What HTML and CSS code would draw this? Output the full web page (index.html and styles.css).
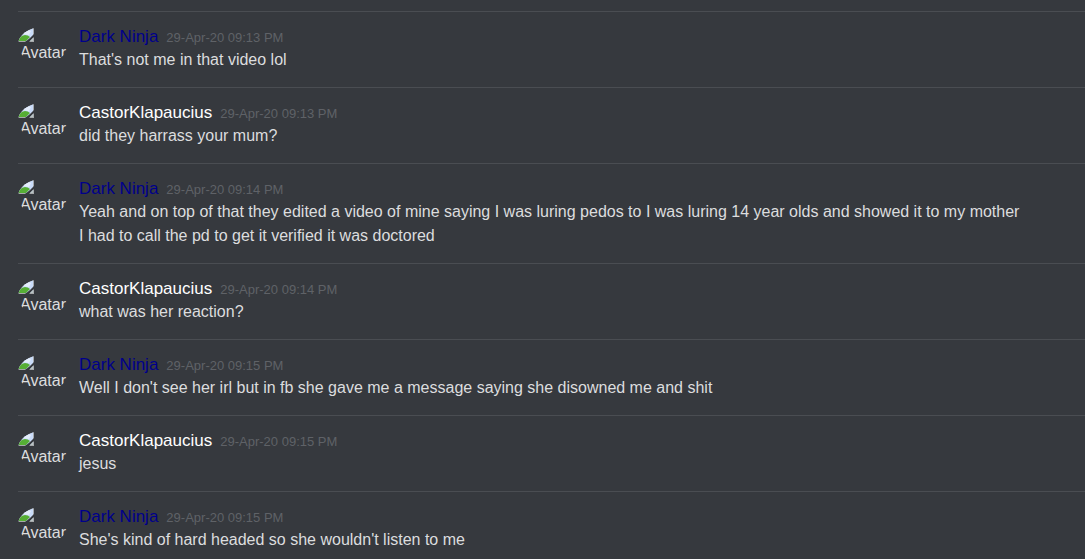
FILE: index.html
```html
<!DOCTYPE html>
<html lang="en">
<head>
<meta charset="utf-8">
<title>Chat log</title>
<link rel="stylesheet" href="styles.css">
</head>
<body>
<svg width="0" height="0" class="defs" aria-hidden="true">
  <symbol id="broken" viewBox="0 0 16 16">
    <path d="M0 0h16v15H0z" fill="#a5a8ab"/>
    <path d="M0 1h15v13H0z" fill="#c9dbf8"/>
    <path d="M4 7q1-2 3-2 2-3 6-1l-2 4z" fill="#e4edfc"/>
    <path d="M0 14q1-5 7-6 3 0 5 2l-4 4z" fill="#56ae35"/>
    <path d="M16 7v3L11 15H7l5-4z" fill="#36393e"/>
    <path d="M15 11v3h-3z" fill="#b9c4c4"/>
  </symbol>
</svg>
<main class="log">
  <article class="group">
    <div class="avatar"><svg class="icon" aria-hidden="true"><use href="#broken"/></svg><span>Avatar</span></div>
    <div class="messages">
      <header><span class="name navy">Dark Ninja</span><time class="time">29-Apr-20 09:13 PM</time></header>
      <p>That's not me in that video lol</p>
    </div>
  </article>
  <article class="group">
    <div class="avatar"><svg class="icon" aria-hidden="true"><use href="#broken"/></svg><span>Avatar</span></div>
    <div class="messages">
      <header><span class="name">CastorKlapaucius</span><time class="time">29-Apr-20 09:13 PM</time></header>
      <p>did they harrass your mum?</p>
    </div>
  </article>
  <article class="group">
    <div class="avatar"><svg class="icon" aria-hidden="true"><use href="#broken"/></svg><span>Avatar</span></div>
    <div class="messages">
      <header><span class="name navy">Dark Ninja</span><time class="time">29-Apr-20 09:14 PM</time></header>
      <p>Yeah and on top of that they edited a video of mine saying I was luring pedos to I was luring 14 year olds and showed it to my mother</p>
      <p>I had to call the pd to get it verified it was doctored</p>
    </div>
  </article>
  <article class="group">
    <div class="avatar"><svg class="icon" aria-hidden="true"><use href="#broken"/></svg><span>Avatar</span></div>
    <div class="messages">
      <header><span class="name">CastorKlapaucius</span><time class="time">29-Apr-20 09:14 PM</time></header>
      <p>what was her reaction?</p>
    </div>
  </article>
  <article class="group">
    <div class="avatar"><svg class="icon" aria-hidden="true"><use href="#broken"/></svg><span>Avatar</span></div>
    <div class="messages">
      <header><span class="name navy">Dark Ninja</span><time class="time">29-Apr-20 09:15 PM</time></header>
      <p>Well I don't see her irl but in fb she gave me a message saying she disowned me and shit</p>
    </div>
  </article>
  <article class="group">
    <div class="avatar"><svg class="icon" aria-hidden="true"><use href="#broken"/></svg><span>Avatar</span></div>
    <div class="messages">
      <header><span class="name">CastorKlapaucius</span><time class="time">29-Apr-20 09:15 PM</time></header>
      <p>jesus</p>
    </div>
  </article>
  <article class="group">
    <div class="avatar"><svg class="icon" aria-hidden="true"><use href="#broken"/></svg><span>Avatar</span></div>
    <div class="messages">
      <header><span class="name navy">Dark Ninja</span><time class="time">29-Apr-20 09:15 PM</time></header>
      <p>She's kind of hard headed so she wouldn't listen to me</p>
    </div>
  </article>
</main>
</body>
</html>
```
FILE: styles.css
```css
body {
  margin: 0;
  background: #36393e;
  color: #dcddde;
  font-family: "Liberation Sans", Arial, sans-serif;
  font-size: 16px;
}
.defs { position: absolute; }
.log { padding: 11px 0 0 18px; }
.group {
  display: flex;
  gap: 11px;
  padding: 15px 0;
  border-top: 1px solid #4a4d52;
}
.group:last-child { padding-bottom: 0; }
.avatar {
  flex: none;
  width: 50px;
  height: 36px;
  border-radius: 50%;
  overflow: hidden;
  line-height: 20px;
}
.icon { display: block; width: 16px; height: 16px; }
.avatar span { padding-left: 2px; }
.messages { flex: 1; min-width: 0; }
header {
  display: flex;
  align-items: baseline;
  gap: 8px;
  height: 21px;
  line-height: 20px;
}
.name { color: #fff; font-size: 17px; }
.navy { color: #00008b; }
.time { color: #5f6267; font-size: 13px; }
p { margin: 0; line-height: 24px; }
```
